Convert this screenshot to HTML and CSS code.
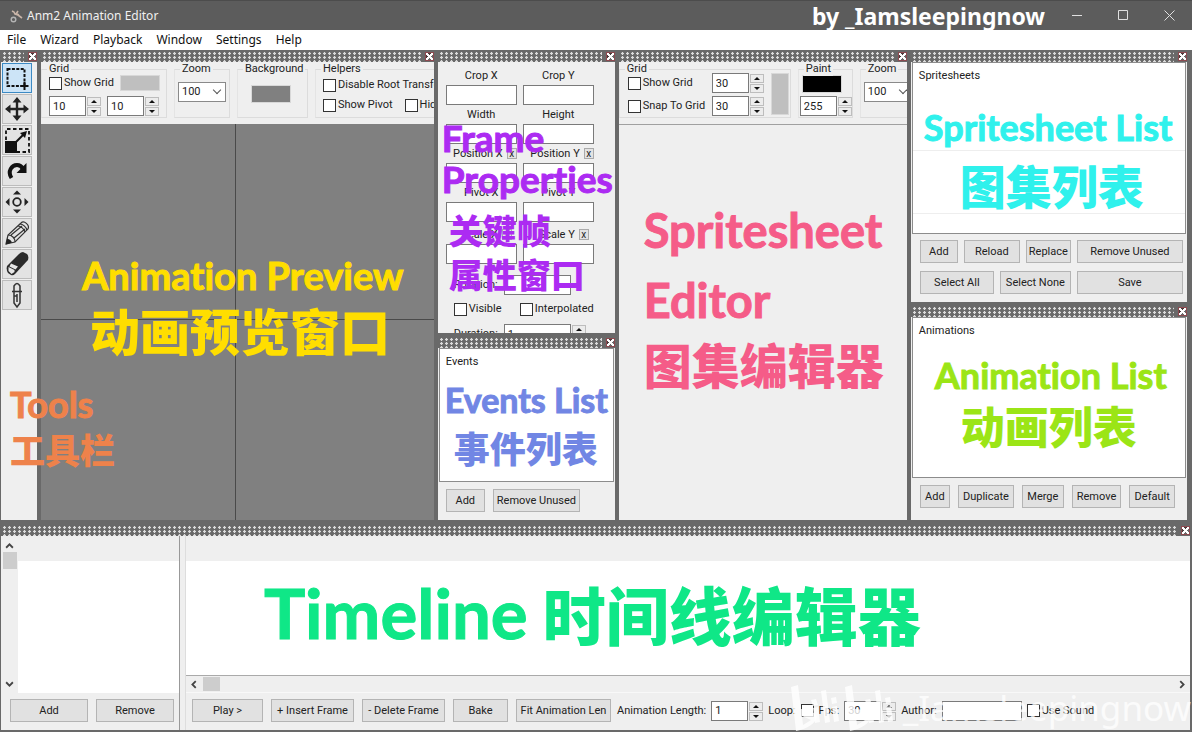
FILE: index.html
```html
<!DOCTYPE html>
<html lang="en">
<head>
    <meta charset="UTF-8">
    <meta name="viewport" content="width=device-width, initial-scale=1.0">
    <title>Anm2 Animation Editor</title>
    <link rel="stylesheet" href="styles.css">
</head>
<body>

    <header class="titlebar">
        <svg class="app-icon" viewBox="0 0 14 14">
            <path d="M3 2l2 1 1 2 3 1 4 3M7 5l2-3M8 5l2 1" fill="none" stroke="#c9b5a8" stroke-width="1.6"/>
            <circle cx="4.5" cy="10.5" r="2.3" fill="none" stroke="#b4b4b4" stroke-width="1.4"/>
        </svg>
        <h1 class="app-title">Anm2 Animation Editor</h1>
        <span class="byline">by _Iamsleepingnow</span>
        <button class="win-btn" aria-label="Minimize"><svg viewBox="0 0 11 11"><path d="M0 5.5h10"/></svg></button>
        <button class="win-btn" aria-label="Maximize"><svg viewBox="0 0 11 11"><path d="M.5.5h9v9h-9z"/></svg></button>
        <button class="win-btn" aria-label="Close"><svg viewBox="0 0 11 11"><path d="M.5.5l10 10M10.5.5l-10 10"/></svg></button>
    </header>

    <nav class="menubar">
        <button>File</button>
        <button>Wizard</button>
        <button>Playback</button>
        <button>Window</button>
        <button>Settings</button>
        <button>Help</button>
    </nav>

    <main class="workspace">
        <!-- Tools -->
        <section class="dock tools-dock">
            <div class="grip"><i></i><button class="dock-close" aria-label="Close"></button></div>
            <div class="panel tools">
                <button class="tool active" aria-label="Select"><svg viewBox="0 0 28 28"><path d="M4.500 5h17v17h-17z" fill="none" stroke="#111" stroke-width="2" stroke-dasharray="3 1.4"/><path d="M21.500 18v8M17.500 22h8" stroke="#111" stroke-width="2"/></svg></button>
                <button class="tool" aria-label="Move"><svg viewBox="0 0 28 28"><path d="M14 5v18M5 14h18" stroke="#222" stroke-width="2.4"/><path d="M14 2l4.500 5.500h-9zM14 26l4.500-5.500h-9zM2 14l5.500-4.500v9zM26 14l-5.500-4.500v9z" fill="#222"/></svg></button>
                <button class="tool" aria-label="Scale"><svg viewBox="0 0 28 28"><path d="M3 14V3h23v23H14" fill="none" stroke="#111" stroke-width="1.800" stroke-dasharray="3.500 2.500"/><path d="M2 15h12v12H2z" fill="#111"/><path d="M13 16l8-8" stroke="#111" stroke-width="2"/><path d="M24 5l-2 7-5-5z" fill="#111"/></svg></button>
                <button class="tool" aria-label="Rotate"><svg viewBox="0 0 28 28"><path d="M8.500 21C4 14 9 8 14 8q4 0 6 4" fill="none" stroke="#111" stroke-width="4"/><path d="M23.500 6v10H13.500z" fill="#111"/></svg></button>
                <button class="tool" aria-label="Pivot"><svg viewBox="0 0 28 28"><circle cx="14" cy="14" r="3.800" fill="none" stroke="#222" stroke-width="1.800"/><path d="M14 2.500l4 4h-8zM14 25.500l4-4h-8zM2.500 14l4-4v8zM25.500 14l-4-4v8z" fill="#222"/></svg></button>
                <button class="tool" aria-label="Draw"><svg viewBox="0 0 28 28"><g fill="none" stroke="#333" stroke-width="1.200"><path d="M3 25l2-9L18 4c3-3 9 2 7 6L12 23z"/><path d="M5 16c4 0 7 3 7 7M8 16l11-9M11 19l11-9M15 7c3 0 6 3 7 6M17 5c3 0 6 3 7 6"/></g><path d="M3 25.500l1-6q4 1 5 4z" fill="#222"/></svg></button>
                <button class="tool" aria-label="Erase"><svg viewBox="0 0 28 28"><path d="M4 16L16 4q2-2 4-2l4 2q2 2 1 6L12 24q-2 2-4 1l-3-2q-2-3-1-7z" fill="#2b2b2b"/><path d="M5.500 17l6 3v2l-3 2-3-3zM8 13.500l7 3-2.500 3-6-3z" fill="#e6e6e6"/></svg></button>
                <button class="tool" aria-label="Color picker"><svg viewBox="0 0 28 28"><g fill="none" stroke="#333" stroke-width="1.500"><path d="M11 11V5q3-5 6 0v6M11 11v11l3 4 3-4V11M9 10.500h10M11 15h3M14 13v8"/></g></svg></button>
            </div>
            <div class="note note-tools">Tools<span>工具栏</span></div>
        </section>

        <!-- Animation preview -->
        <section class="dock">
            <div class="grip"><i></i><button class="dock-close" aria-label="Close"></button></div>
            <div class="panel">
                <div class="toolbar">
                    <fieldset class="group grid-group">
                        <legend>Grid</legend>
                        <div class="row">
                            <label class="check"><input type="checkbox">Show Grid</label>
                            <button class="swatch light" aria-label="Grid color"></button>
                        </div>
                        <div class="row">
                            <span class="spin"><input type="text" value="10" aria-label="Grid width"><span><button aria-label="Up"></button><button aria-label="Down"></button></span></span>
                            <span class="spin"><input type="text" value="10" aria-label="Grid height"><span><button aria-label="Up"></button><button aria-label="Down"></button></span></span>
                        </div>
                    </fieldset>
                    <fieldset class="group zoom-group">
                        <legend>Zoom</legend>
                        <span class="combo"><select aria-label="Zoom"><option>100</option></select></span>
                    </fieldset>
                    <fieldset class="group bg-group">
                        <legend>Background</legend>
                        <button class="swatch dark" aria-label="Background color"></button>
                    </fieldset>
                    <fieldset class="group helpers-group">
                        <legend>Helpers</legend>
                        <div class="row"><label class="check"><input type="checkbox">Disable Root Transform</label></div>
                        <div class="row">
                            <label class="check"><input type="checkbox">Show Pivot</label>
                            <label class="check"><input type="checkbox">Hide</label>
                        </div>
                    </fieldset>
                </div>
                <div class="canvas"></div>
            </div>
            <div class="note note-preview">Animation Preview<span>动画预览窗口</span></div>
        </section>

        <!-- Frame properties and events -->
        <div class="column">
            <section class="dock frame-dock">
                <div class="grip"><i></i><button class="dock-close" aria-label="Close"></button></div>
                <div class="panel props">
                    <div class="fields">
                        <div class="field"><label for="cropx">Crop X</label><input id="cropx" type="text"></div>
                        <div class="field"><label for="cropy">Crop Y</label><input id="cropy" type="text"></div>
                        <div class="field"><label for="width">Width</label><input id="width" type="text"></div>
                        <div class="field"><label for="height">Height</label><input id="height" type="text"></div>
                        <div class="field end"><label for="posx">Position X</label><button class="clear">x</button><input id="posx" type="text"></div>
                        <div class="field end"><label for="posy">Position Y</label><button class="clear">x</button><input id="posy" type="text"></div>
                        <div class="field"><label for="pivx">Pivot X</label><input id="pivx" type="text"></div>
                        <div class="field"><label for="pivy">Pivot Y</label><input id="pivy" type="text"></div>
                        <div class="field scale"><label for="scx">Scale X</label><button class="clear">x</button><input id="scx" type="text"></div>
                        <div class="field scale"><label for="scy">Scale Y</label><button class="clear">x</button><input id="scy" type="text"></div>
                    </div>
                    <div class="line"><label for="rot">Rotation:</label><input id="rot" type="text"></div>
                    <div class="checks">
                        <label class="check"><input type="checkbox">Visible</label>
                        <label class="check"><input type="checkbox">Interpolated</label>
                    </div>
                    <div class="line"><label for="dur">Duration:</label><span class="spin"><input id="dur" type="text" value="1"><span><button aria-label="Up"></button><button aria-label="Down"></button></span></span></div>
                </div>
                <div class="note note-frame">Frame<br>Properties<span>关键帧<br>属性窗口</span></div>
            </section>
            <section class="dock events-dock">
                <div class="grip"><i></i><button class="dock-close" aria-label="Close"></button></div>
                <div class="panel">
                    <div class="list"><h2>Events</h2></div>
                    <div class="buttons">
                        <button class="btn">Add</button>
                        <button class="btn">Remove Unused</button>
                    </div>
                </div>
                <div class="note note-events">Events List<span>事件列表</span></div>
            </section>
        </div>

        <!-- Spritesheet editor -->
        <section class="dock">
            <div class="grip"><i></i><button class="dock-close" aria-label="Close"></button></div>
            <div class="panel">
                <div class="toolbar lined">
                    <fieldset class="group sheet-grid-group">
                        <legend>Grid</legend>
                        <div class="stack">
                            <label class="check"><input type="checkbox">Show Grid</label>
                            <label class="check"><input type="checkbox">Snap To Grid</label>
                        </div>
                        <div class="stack">
                            <span class="spin"><input type="text" value="30" aria-label="Grid width"><span><button aria-label="Up"></button><button aria-label="Down"></button></span></span>
                            <span class="spin"><input type="text" value="30" aria-label="Grid height"><span><button aria-label="Up"></button><button aria-label="Down"></button></span></span>
                        </div>
                        <button class="swatch light tall" aria-label="Grid color"></button>
                    </fieldset>
                    <fieldset class="group paint-group">
                        <legend>Paint</legend>
                        <button class="swatch black" aria-label="Paint color"></button>
                        <span class="spin"><input type="text" value="255" aria-label="Alpha"><span><button aria-label="Up"></button><button aria-label="Down"></button></span></span>
                    </fieldset>
                    <fieldset class="group zoom-group">
                        <legend>Zoom</legend>
                        <span class="combo"><select aria-label="Zoom"><option>100</option></select></span>
                    </fieldset>
                </div>
            </div>
            <div class="note note-editor">Spritesheet<br>Editor<span>图集编辑器</span></div>
        </section>

        <!-- Spritesheets and animations -->
        <div class="column">
            <section class="dock sheets-dock">
                <div class="grip"><i></i><button class="dock-close" aria-label="Close"></button></div>
                <div class="panel">
                    <div class="list ruled"><h2>Spritesheets</h2></div>
                    <div class="buttons sheet-buttons">
                        <button class="btn">Add</button>
                        <button class="btn">Reload</button>
                        <button class="btn">Replace</button>
                        <button class="btn">Remove Unused</button>
                        <button class="btn wide">Select All</button>
                        <button class="btn">Select None</button>
                        <button class="btn">Save</button>
                    </div>
                </div>
                <div class="note note-sheets">Spritesheet List<span>图集列表</span></div>
            </section>
            <section class="dock anims-dock">
                <div class="grip"><i></i><button class="dock-close" aria-label="Close"></button></div>
                <div class="panel">
                    <div class="list"><h2>Animations</h2></div>
                    <div class="buttons anim-buttons">
                        <button class="btn">Add</button>
                        <button class="btn">Duplicate</button>
                        <button class="btn">Merge</button>
                        <button class="btn">Remove</button>
                        <button class="btn">Default</button>
                    </div>
                </div>
                <div class="note note-anims">Animation List<span>动画列表</span></div>
            </section>
        </div>
    </main>

    <!-- Timeline -->
    <section class="dock timeline">
        <div class="grip"><i></i><button class="dock-close" aria-label="Close"></button></div>
        <div class="timeline-body">
            <div class="layers">
                <div class="layers-view">
                    <div class="vscroll">
                        <svg viewBox="0 0 8 6"><path d="M1 5l3-3 3 3"/></svg>
                        <b></b>
                        <svg viewBox="0 0 8 6"><path d="M1 1l3 3 3-3"/></svg>
                    </div>
                    <div class="track"></div>
                </div>
                <div class="layer-buttons">
                    <button class="btn">Add</button>
                    <button class="btn">Remove</button>
                </div>
            </div>
            <div class="frames">
                <div class="track"></div>
                <div class="hscroll">
                    <svg viewBox="0 0 6 8"><path d="M5 1L2 4l3 3"/></svg>
                    <b></b>
                    <svg viewBox="0 0 6 8"><path d="M1 1l3 3-3 3"/></svg>
                </div>
                <div class="playbar">
                    <button class="btn w72">Play &gt;</button>
                    <button class="btn w84">+ Insert Frame</button>
                    <button class="btn w84">- Delete Frame</button>
                    <button class="btn w56">Bake</button>
                    <button class="btn w96">Fit Animation Len</button>
                    <label for="len">Animation Length:</label>
                    <span class="spin"><input id="len" type="text" value="1"><span><button aria-label="Up"></button><button aria-label="Down"></button></span></span>
                    <label class="check after">Loop:<input type="checkbox"></label>
                    <label for="fps">Fps:</label>
                    <span class="spin"><input id="fps" type="text" value="30"><span><button aria-label="Up"></button><button aria-label="Down"></button></span></span>
                    <label for="author">Author:</label>
                    <input class="author" id="author" type="text">
                    <label class="check"><input type="checkbox">Use Sound</label>
                </div>
            </div>
        </div>
        <div class="note note-timeline">Timeline<span>时间线编辑器</span></div>
        <div class="watermark">
            <svg viewBox="0 0 106 46" role="img" aria-label="bilibili">
                <g id="half">
                    <path fill-rule="evenodd" d="M0 2l7-2 3 24q12 0 16 8-3 10-21 14zM11 31l1 9 8-5z"/>
                    <path d="M20 15l5-1 2 6-5 1zM22 23l5-1 2 15-5 1zM30 6l5-1 4 32-5 1zM40 13l5-1 1 6-5 1zM41 22l5-1 2 15-5 1z"/>
                </g>
                <use href="#half" x="54"/>
            </svg>
            _Iamsleepingnow
        </div>
    </section>

</body>
</html>
```

FILE: styles.css
```css
* {
    box-sizing: border-box;
}
body {
    margin: 0;
    min-height: 100vh;
    display: flex;
    flex-direction: column;
    background: #696969;
    color: #222;
    font: 11px/14px Roboto, "Noto Sans", sans-serif;
    overflow: hidden;
}
button, input, select {
    font: inherit;
    color: inherit;
    margin: 0;
    padding: 0;
    border-radius: 0;
}

/* Title bar and menu */
.titlebar {
    display: flex;
    align-items: center;
    height: 30px;
    padding-left: 9px;
    background: #5c5c5c;
    border-top: 1px solid #4c4c4c;
    color: #f0f0f0;
}
.app-icon {
    width: 14px;
    height: 14px;
    margin-right: 4px;
}
.app-title {
    margin: 0;
    font: 12px "Noto Sans", sans-serif;
    flex: 1;
}
.byline {
    font: bold 23px/28px "Noto Sans", sans-serif;
    color: #fff;
    margin-right: 9px;
}
.win-btn {
    width: 46px;
    height: 28px;
    border: 0;
    background: none;
}
.win-btn svg {
    display: block;
    width: 11px;
    height: 11px;
    margin: auto;
    fill: none;
    stroke: #e0e0e0;
}
.menubar {
    display: flex;
    gap: 14px;
    height: 20px;
    padding-left: 7px;
    background: #fff;
}
.menubar button {
    border: 0;
    background: none;
    font: 12px/20px "Noto Sans", sans-serif;
    color: #111;
}

/* Docks */
.workspace {
    flex: 1;
    display: grid;
    grid-template-columns: 36px minmax(0, 394fr) 177px minmax(0, 289fr) minmax(0, 277fr);
    gap: 4px;
    padding: 1px 5px 0 1px;
}
.column {
    display: flex;
    flex-direction: column;
    gap: 4px;
    min-height: 0;
}
.dock {
    position: relative;
    display: flex;
    flex-direction: column;
    min-width: 0;
    min-height: 0;
}
.grip {
    display: flex;
    height: 11px;
    flex: none;
    padding: 1px 0 0 2px;
}
.grip i {
    flex: 1;
    margin-right: 4px;
    background: radial-gradient(circle at 1.5px 1.5px, #dcdcdc 1px, transparent 1.5px) 0 0 / 5px 4px;
}
.dock-close {
    width: 9px;
    height: 9px;
    border: 1px solid #8d4a50;
    background:
        linear-gradient(45deg, transparent 40%, #fff 40%, #fff 60%, transparent 60%),
        linear-gradient(-45deg, transparent 40%, #fff 40%, #fff 60%, #4a3a3a 60%);
}
.panel {
    flex: 1;
    display: flex;
    flex-direction: column;
    min-height: 0;
    background: #efefef;
    overflow: hidden;
}

/* Tools */
.tools {
    gap: 1px;
    padding: 1px 0 0 1px;
}
.tool {
    width: 30px;
    height: 30px;
    border: 1px solid #bcbcbc;
    background: #e3e3e3;
}
.tool.active {
    border-color: #3c8ac4;
    background: #cce4f7;
}
.tool svg {
    display: block;
    width: 28px;
    height: 28px;
}

/* Group boxes */
.toolbar {
    display: flex;
    gap: 7px;
    height: 62px;
    flex: none;
    padding-top: 7px;
}
.toolbar.lined {
    height: 63px;
    border-bottom: 1px solid #a0a0a0;
}
.group {
    position: relative;
    flex: none;
    height: 49px;
    margin: 0;
    padding: 0;
    border: 1px solid #dcdcdc;
    border-left-color: #e4e4e4;
}
.group legend {
    position: absolute;
    top: -8px;
    left: 5px;
    padding: 0 2px;
    background: #efefef;
}
.row {
    display: flex;
    align-items: center;
    gap: 6px;
}
.check {
    display: inline-flex;
    align-items: center;
    gap: 2px;
    white-space: nowrap;
}
.check input {
    appearance: none;
    flex: none;
    width: 13px;
    height: 13px;
    border: 1px solid #333;
    background: #fff;
}
input[type="text"] {
    height: 20px;
    min-width: 0;
    padding-left: 3px;
    border: 1px solid #7a7a7a;
    background: #fff;
}
.spin {
    display: inline-flex;
    gap: 1px;
}
.spin input {
    width: 37px;
}
.spin > span {
    display: flex;
    flex-direction: column;
    gap: 1px;
    padding-top: 1px;
}
.spin button {
    display: flex;
    align-items: center;
    justify-content: center;
    width: 14px;
    height: 9px;
    border: 1px solid #bdbdbd;
    background: #ececec;
}
.spin button::after {
    content: "";
    border: 3px solid transparent;
    border-top: 0;
    border-bottom-color: #111;
}
.spin button:last-child::after {
    border-bottom: 0;
    border-top: 3px solid #111;
}
.combo {
    position: relative;
    display: block;
    width: 48px;
}
.combo select {
    appearance: none;
    display: block;
    width: 100%;
    height: 20px;
    padding-left: 3px;
    border: 1px solid #8a8a8a;
    background: #fff;
}
.combo::after {
    content: "";
    position: absolute;
    right: 6px;
    top: 5px;
    width: 5px;
    height: 5px;
    border: solid #555;
    border-width: 0 1px 1px 0;
    transform: rotate(45deg);
}
.swatch {
    display: block;
    width: 40px;
    height: 16px;
    border: 1px solid #d8d8d8;
}
.swatch.light { background: #bfbfbf; }
.swatch.dark { background: #808080; }
.swatch.black { background: #000; }
.swatch.tall {
    width: 18px;
    height: 42px;
}
.grid-group {
    width: 126px;
    padding: 5px 0 0 7px;
}
.grid-group .row + .row {
    margin-top: 5px;
}
.zoom-group {
    width: 56px;
    padding: 12px 0 0 3px;
}
.bg-group {
    width: 71px;
    padding: 15px 0 0 13px;
}
.bg-group .swatch {
    height: 18px;
}
.helpers-group {
    width: 190px;
    padding: 8px 0 0 7px;
}
.helpers-group .row {
    height: 14px;
    gap: 12px;
}
.helpers-group .row + .row {
    margin-top: 6px;
}
.sheet-grid-group {
    display: flex;
    gap: 7px;
    width: 172px;
    padding: 3px 0 0 8px;
}
.stack {
    display: flex;
    flex-direction: column;
    gap: 3px;
}
.stack .check {
    width: 77px;
    height: 20px;
}
.paint-group {
    width: 55px;
    padding: 5px 0 0 1px;
}
.paint-group .swatch {
    height: 18px;
    margin: 0 0 3px 2px;
}

/* Preview canvas */
.canvas {
    flex: 1;
    background:
        linear-gradient(#4a4a4a, #4a4a4a) 49.5% 0 / 1px 100% no-repeat,
        linear-gradient(#4a4a4a, #4a4a4a) 0 49.3% / 100% 1px no-repeat,
        #808080;
}

/* Frame properties */
.frame-dock { flex: 281 1 0; }
.events-dock { flex: 182 1 0; }
.props {
    padding: 4px 21px 0 8px;
}
.fields {
    display: grid;
    grid-template-columns: 1fr 1fr;
    gap: 0 6px;
}
.field {
    display: flex;
    flex-wrap: wrap;
    align-items: center;
    justify-content: center;
    gap: 0 4px;
}
.field.end,
.field.scale {
    justify-content: flex-end;
}
.field.scale {
    margin-top: 3px;
}
.field.scale .clear {
    margin-right: 5px;
}
.field label {
    line-height: 19px;
}
.field input {
    width: 100%;
}
.clear {
    width: 10px;
    height: 11px;
    border: 1px solid #aaa;
    background: #e3e3e3;
    font-size: 10px;
    line-height: 8px;
}
.line {
    display: flex;
    align-items: center;
    flex: none;
    margin-top: 11px;
}
.line label {
    width: 50px;
    margin-left: 8px;
}
.line input,
.line .spin input {
    width: 67px;
}
.checks {
    display: flex;
    justify-content: space-between;
    margin: 7px 0 0 8px;
}
.checks + .line {
    margin-top: 8px;
}

/* Lists */
.list {
    flex: 1;
    margin: 0 1px;
    border: 1px solid #8c8c8c;
    background: #fff;
}
.list h2 {
    margin: 0;
    padding: 6px;
    font: inherit;
}
.list.ruled {
    background: linear-gradient(transparent 87px, #eee 87px, #eee 88px, transparent 88px, transparent 150px, #eee 150px, #eee 151px, #fff 151px) #fff;
}
.buttons {
    display: flex;
    gap: 8px;
    padding: 7px 8px 8px;
}
.btn {
    height: 23px;
    padding: 0 3px;
    border: 1px solid #b4b4b4;
    background: #e1e1e1;
    white-space: nowrap;
}
.events-dock .btn:first-child {
    width: 39px;
}
.events-dock .btn:last-child {
    width: 87px;
}
.sheets-dock { flex: 250 1 0; }
.anims-dock { flex: 213 1 0; }
.sheet-buttons {
    display: grid;
    grid-template-columns: 38px 30px 20px 45px 1fr;
    gap: 8px 6px;
    padding: 6px 4px 8px 9px;
}
.sheet-buttons .btn { padding: 0; }
.sheet-buttons .btn:nth-child(2) { grid-column: 2 / 4; }
.sheet-buttons .wide { grid-column: 1 / 3; }
.sheet-buttons .btn:nth-child(6) { grid-column: 3 / 5; }
.anim-buttons {
    padding: 7px 12px 12px 9px;
}
.anim-buttons .btn {
    flex: 1 1 auto;
}

/* Timeline */
.timeline {
    flex: none;
    margin-top: 5px;
    padding: 0 2px 2px 1px;
}
.timeline-body {
    display: flex;
    gap: 5px;
    height: 194px;
    background: #efefef;
}
.layers {
    display: flex;
    flex-direction: column;
    width: 179px;
    border-right: 1px solid #999;
}
.layers-view {
    display: flex;
    flex: 1;
}
.track {
    flex: 1;
    border-top: 25px solid #efefef;
    background: #fff;
}
.vscroll {
    display: flex;
    flex-direction: column;
    align-items: center;
    width: 17px;
    padding: 6px 0 5px;
}
.vscroll svg {
    width: 9px;
    height: 7px;
    flex: none;
}
.vscroll svg:last-child {
    margin-top: auto;
}
.vscroll b {
    width: 14px;
    height: 17px;
    margin-top: 3px;
    background: #cdcdcd;
}
.hscroll {
    display: flex;
    align-items: center;
    height: 18px;
    padding: 0 4px;
    border-top: 1px solid #aaa;
    border-bottom: 1px solid #f8f8f8;
}
.hscroll svg {
    width: 7px;
    height: 9px;
}
.hscroll svg:last-child {
    margin-left: auto;
}
.hscroll b {
    width: 17px;
    height: 14px;
    margin-left: 6px;
    background: #cdcdcd;
}
.vscroll path,
.hscroll path {
    fill: none;
    stroke: #444;
    stroke-width: 1.6;
}
.layer-buttons {
    display: flex;
    gap: 8px;
    padding: 6px 5px 8px 9px;
}
.layer-buttons .btn {
    flex: 1;
}
.frames {
    flex: 1;
    display: flex;
    flex-direction: column;
    min-width: 0;
    border-left: 1px solid #ddd;
}
.playbar {
    display: flex;
    align-items: center;
    gap: 5px;
    height: 37px;
    padding: 0 6px 2px;
    white-space: nowrap;
}
.playbar .btn {
    flex: none;
    margin-right: 3px;
}
.w56 { width: 55px; }
.w72 { width: 71px; }
.w84 { width: 83px; }
.w96 { width: 95px; }
.playbar .w96 { margin-right: 1px; }
.check.after { gap: 5px; }
.author { width: 80px; }

/* Captions over the docks */
.note {
    position: absolute;
    z-index: 2;
    font-family: Lato, "Noto Sans CJK SC", sans-serif;
    font-weight: bold;
    font-variant-ligatures: none;
    -webkit-text-stroke: 1px currentColor;
    white-space: nowrap;
    pointer-events: none;
}
.note span {
    display: block;
    font-family: "Noto Sans CJK SC", sans-serif;
    font-weight: 900;
    -webkit-text-stroke: 0;
}
.note-tools {
    left: 9px;
    top: 329px;
    color: #ee824b;
    font-size: 36px;
    line-height: 48px;
}
.note-tools span {
    font-size: 35px;
    line-height: 42px;
}
.note-preview {
    left: 41px;
    top: 200px;
    color: #ffde00;
    font-size: 38px;
    line-height: 48px;
}
.note-preview span {
    margin-left: 8px;
    font-size: 50px;
    line-height: 60px;
}
.note-frame {
    left: 4px;
    top: 66px;
    color: #ac2bf2;
    font-size: 37px;
    line-height: 41px;
}
.note-frame span {
    margin: 9px 0 0 7px;
    font-size: 34px;
    line-height: 44px;
}
.note-events {
    left: 7px;
    top: 40px;
    color: #7186e4;
    font-size: 34px;
    line-height: 46px;
}
.note-events span {
    margin-left: 9px;
    font-size: 36px;
    line-height: 48px;
}
.note-editor {
    left: 25px;
    top: 144px;
    color: #f55c88;
    font-size: 47px;
    line-height: 70px;
}
.note-editor span {
    font-size: 48px;
    line-height: 56px;
}
.note-sheets {
    left: 13px;
    top: 52px;
    color: #2ff1ec;
    font-size: 36px;
    line-height: 48px;
}
.note-sheets span {
    margin-left: 36px;
    font-size: 46px;
    line-height: 66px;
}
.note-anims {
    left: 24px;
    top: 46px;
    color: #9be516;
    font-size: 36px;
    line-height: 46px;
}
.note-anims span {
    margin-left: 26px;
    font-size: 44px;
    line-height: 54px;
}
.note-timeline {
    display: flex;
    gap: 15px;
    left: 264px;
    top: 46px;
    color: #0fe787;
    font-size: 69px;
    line-height: 84px;
}
.note-timeline span {
    font-size: 63px;
}
.watermark {
    position: absolute;
    z-index: 2;
    right: 1px;
    bottom: 0;
    display: flex;
    align-items: center;
    gap: 6px;
    font: 35px/48px "Noto Sans", sans-serif;
    color: rgba(255, 255, 255, 0.75);
    pointer-events: none;
}
.watermark svg {
    width: 106px;
    height: 46px;
    fill: rgba(255, 255, 255, 0.8);
}
```
